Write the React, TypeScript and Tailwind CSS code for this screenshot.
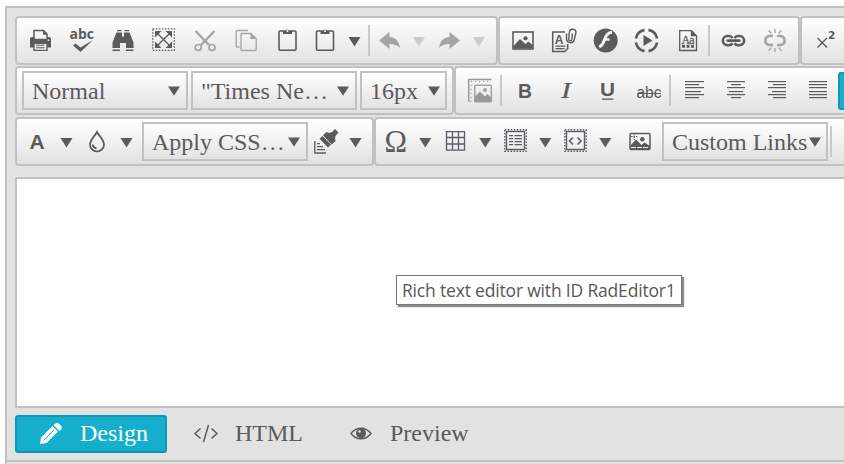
import type { ReactNode } from 'react';

const DARK = '#5b5b5b';
const MUTED = '#a5a5a5';

type CellProps = { x: number; y: number; w: number; h?: number; label: string; children: ReactNode };

// Every glyph is drawn on one shared grid; a cell shows its own window of that grid.
function Cell({ x, y, w, h = 45, label, children }: CellProps) {
  return (
    <button aria-label={label} className="block shrink-0">
      <svg width={w} height={h} viewBox={`${x} ${y} ${w} ${h}`} fill={DARK} className="block">
        {children}
      </svg>
    </button>
  );
}

function Arrow({ x, y, w, cx, off }: { x: number; y: number; w: number; cx: number; off?: boolean }) {
  const t = y + 19;
  return (
    <Cell x={x} y={y} w={w} label="Open menu">
      <path d={`M${cx - 6} ${t}h12l-6 9.5z`} fill={off ? '#cbcbcb' : DARK} />
    </Cell>
  );
}

const Sep = () => <div className="mx-0.5 mt-[7px] h-[31px] w-0.5 shrink-0 bg-[#c8c8c8]" />;

function Group({ className, children }: { className: string; children?: ReactNode }) {
  return (
    <div
      className={`flex h-[49px] shrink-0 items-start rounded-[4px] border-2 border-[#c1c1c1] bg-linear-to-b from-white to-[#e2e2e2] ${className}`}
    >
      {children}
    </div>
  );
}

function Select({ text, className, pad = 'pr-[6px]' }: { text: string; className: string; pad?: string }) {
  return (
    <div
      className={`mt-[3px] flex h-[39px] shrink-0 items-center justify-between border-2 border-[#c1c1c1] bg-linear-to-b from-white to-[#e2e2e2] pl-[8px] ${pad} ${className}`}
    >
      <span className="w-0 pt-0.5 text-2xl leading-[35px] whitespace-nowrap">{text}</span>
      <svg width="12" height="10" viewBox="0 0 12 10" fill={DARK} className="shrink-0">
        <path d="M0 0.5h12L6 9.8z" />
      </svg>
    </div>
  );
}

function Clipboard({ x }: { x: number }) {
  return (
    <>
      <rect x={x + 1} y="31" width="17" height="19.3" rx="1" fill="none" stroke={DARK} strokeWidth="1.6" />
      <path d={`M${x + 5} 34v-3h2.4a2.2 2.2 0 0 1 4.2 0h2.4v3z`} />
      <circle cx={x + 9.5} cy="31" r="1" fill="#fff" />
    </>
  );
}

function Lines({ rows }: { rows: [number, number][] }) {
  const ys = [81, 84, 87, 91, 94, 97];
  return (
    <>
      {rows.map(([a, b], i) => (
        <rect key={i} x={a} y={ys[i]} width={b - a} height="1.2" />
      ))}
    </>
  );
}

function Stamp({ x }: { x: number }) {
  return (
    <>
      <rect x={x + 0.8} y="129.8" width="21.4" height="21.4" fill="none" stroke={DARK} strokeWidth="1.4" strokeDasharray="1.5 1.5" />
      <rect x={x + 2.5} y="131.5" width="18" height="18" fill="none" stroke="#5b5b6c" strokeWidth="1.4" />
    </>
  );
}

function RowOne() {
  const y = 18;
  return (
    <div className="flex">
      <Group className="w-[483px] pl-[3px]">
        <Cell x={20} y={y} w={41} label="Print">
          <path d="M32 37h17a2 2 0 0 1 2 2v8.500H30V39a2 2 0 0 1 2-2z" />
          <path d="M34 39.500v-9h9.500l3.500 3.500v5.500z" fill="#f6f6f6" stroke={DARK} strokeWidth="1.500" />
          <path d="M43 30l4.700 4.700H43z" />
          <path d="M33 39h15v2.500H33z" />
          <path d="M34 43.300h13v7H34z" fill="#ededed" stroke={DARK} strokeWidth="1.300" />
          <path d="M36 44.800h8.500v1H36zM36 47.300h8.500v1H36z" />
          <path d="M47.500 39.500h2v1.200h-2z" fill="#fff" />
        </Cell>
        <Cell x={61} y={y} w={41} label="Spell check">
          <text x="69.5" y="39" fontSize="14" fontWeight="700" fontFamily="'Open Sans', sans-serif">abc</text>
          <path d="M73 45.5l2.500-2 5 4L93 40 80.500 52z" />
        </Cell>
        <Cell x={102} y={y} w={41} label="Find">
          <path d="M117 30h4.500v1.200H117zM124.500 30h4.500v1.200h-4.500zM116.500 32.500h5.500v4h2v-4h5.500l4 10v5.500h-7.500v-5h-6v5h-7.500v-5.500zM112.500 49.500h7.500v1.500h-7.500zM126 49.500h7.500v1.500H126z" />
        </Cell>
        <Cell x={143} y={y} w={41} label="Select all">
          <rect x="152.800" y="28.800" width="21.500" height="21.500" fill="none" stroke={DARK} strokeWidth="1.300" strokeDasharray="1.5 1.5" />
          <path d="M157 33l13 13M170 33l-13 13" stroke={DARK} strokeWidth="1.400" />
          <path d="M155 31h6.500L155 37.500zM172 31v6.500L165.500 31zM155 48v-6.500l6.500 6.500zM172 48h-6.500l6.500-6.500z" />
        </Cell>
        <Cell x={184} y={y} w={41} label="Cut">
          <g fill="none" stroke={MUTED}>
            <path d="M195.500 31l13.500 14M214.500 31L201 45" strokeWidth="2.400" />
            <circle cx="198.200" cy="47.500" r="3" strokeWidth="1.700" />
            <circle cx="212" cy="47.500" r="3" strokeWidth="1.700" />
          </g>
        </Cell>
        <Cell x={225} y={y} w={41} label="Copy">
          <g fill="none" stroke={MUTED} strokeWidth="1.300">
            <path d="M239.500 47h-2.300a1 1 0 0 1-1-1V31.500a1 1 0 0 1 1-1H248" />
            <path d="M242 33.500h9l5.200 5v11a1 1 0 0 1-1 1H242a1 1 0 0 1-1-1v-15a1 1 0 0 1 1-1z" />
          </g>
          <path d="M250.500 33l6 6h-6z" fill={MUTED} />
        </Cell>
        <Cell x={266} y={y} w={42} label="Paste"><Clipboard x={278} /></Cell>
        <Cell x={308} y={y} w={34} label="Paste options"><Clipboard x={315.500} /></Cell>
        <Arrow x={342} y={y} w={24} cx={354.500} />
        <Sep />
        <Cell x={372} y={y} w={34} label="Undo">
          <path d="M379 40.500L389.500 32v5c6 .5 9.500 4 10.500 11-3-3-6-4-10.500-4v5z" fill={MUTED} />
        </Cell>
        <Arrow x={406} y={y} w={26} cx={419} off />
        <Cell x={432} y={y} w={34} label="Redo">
          <path d="M460 40.500L449.500 32v5c-6 .5-9.500 4-10.500 11 3-3 6-4 10.500-4v5z" fill={MUTED} />
        </Cell>
        <Arrow x={466} y={y} w={28} cx={479} off />
      </Group>
      <Group className="w-[302px] pl-[2px]">
        <Cell x={502} y={y} w={41} label="Image">
          <rect x="513" y="32" width="20" height="17" fill="none" stroke={DARK} strokeWidth="1.600" />
          <path d="M513 46.500l7-7.500 5.500 5 3-2.500 4.500 4v3h-20z" />
          <circle cx="525.500" cy="38.300" r="2.100" />
        </Cell>
        <Cell x={543} y={y} w={41} label="Documents">
          <path d="M565 32h-12.300v19.500h12l3-3V44" fill="none" stroke={DARK} strokeWidth="1.500" />
          <text x="554.800" y="44" fontSize="12" fontWeight="700" fontFamily="'Liberation Sans', sans-serif">A</text>
          <path d="M555.500 45.500h10v1.200h-10zM555.500 48h9v1.200h-9z" />
          <path d="M566.500 33.500v5.500a3.900 3.900 0 0 0 7.600 1l1.800-7c.5-4.500-6-5-6.500-1l-.7 7c0 2.500 3 2.500 3.200 0l.5-5.500" fill="none" stroke={DARK} strokeWidth="1.400" />
        </Cell>
        <Cell x={584} y={y} w={41} label="Flash">
          <circle cx="605.700" cy="40.500" r="12" />
          <path d="M612 32.500c-4.500-.5-6 3-7.300 6.500-1.200 3.500-2 6.500-5.500 7.800" fill="none" stroke="#f5f5f5" strokeWidth="3" />
          <path d="M604.500 39.500h5" stroke="#f5f5f5" strokeWidth="2.400" />
        </Cell>
        <Cell x={625} y={y} w={41} label="Media">
          <g fill="none" stroke={DARK} strokeWidth="2.600">
            <path d="M648.500 29.900a10.800 10.800 0 0 1 8.600 8.600M657.100 42.500a10.800 10.800 0 0 1-8.600 8.600M644.500 51.100a10.800 10.800 0 0 1-8.600-8.600M635.900 38.500a10.800 10.800 0 0 1 8.600-8.600" />
          </g>
          <path d="M643.500 35l9 5.500-9 5.500z" />
        </Cell>
        <Cell x={666} y={y} w={40} label="Template">
          <path d="M679.700 30.700h11.800l5 5v14.800h-16.800z" fill="none" stroke={DARK} strokeWidth="1.300" />
          <path d="M690.800 30l6.200 6.200h-6.200z" />
          <text x="681.500" y="43.500" fontSize="12" fontFamily="'Liberation Serif', serif" stroke={DARK} strokeWidth=".3" textLength="13">Aa</text>
          <path d="M682 45h3v2.800h-3zM686.500 45h3v2.800h-3zM691 45h3v2.800h-3z" />
        </Cell>
        <Sep />
        <Cell x={712} y={y} w={42} label="Link">
          <g fill="none" stroke={DARK} strokeWidth="2.600">
            <path d="M732.500 38c-1-1.500-2-2-3.500-2h-1.500a4.600 4.600 0 0 0 0 9.200h1.500c1.500 0 2.500-.5 3.500-2" />
            <path d="M734.500 38c1-1.500 2-2 3.500-2h1.500a4.600 4.600 0 0 1 0 9.200H738c-1.500 0-2.500-.5-3.500-2" />
            <path d="M727.800 40.600h11.500" strokeWidth="2.800" strokeLinecap="round" />
          </g>
        </Cell>
        <Cell x={754} y={y} w={42} label="Remove link">
          <g fill="none" stroke={MUTED}>
            <path d="M773 36h-4a4.600 4.600 0 0 0 0 9h4M777 36h4a4.600 4.600 0 0 1 0 9h-4" strokeWidth="2.600" />
            <path d="M775 29v4M775 48v4M768.500 30.500l3 3M781.500 30.500l-3 3M768.500 50.500l3-3M781.500 50.500l-3-3" strokeWidth="1.300" />
          </g>
        </Cell>
      </Group>
      <Group className="w-[240px] pl-[2px]">
        <Cell x={804} y={y} w={42} label="Superscript">
          <path d="M817.500 38l9.500 9.500M827 38l-9.500 9.500" stroke={DARK} strokeWidth="1.300" />
          <text x="828" y="39.300" fontSize="10.500" fontWeight="700" fontFamily="'DejaVu Sans', sans-serif">2</text>
        </Cell>
      </Group>
    </div>
  );
}

function RowTwo() {
  const y = 68;
  return (
    <div className="mt-px flex">
      <Group className="w-[439px] gap-[3px] pl-[5px]">
        <Select text="Normal" className="w-[166px]" />
        <Select text={'"Times Ne…'} className="w-[166px]" />
        <Select text="16px" className="w-[87px]" pad="pr-[5px]" />
      </Group>
      <Group className="w-[600px]">
        <Cell x={456} y={y} w={42} label="Image map">
          <g fill="none" stroke={MUTED}>
            <path d="M468.700 102V79.500H491.500" strokeWidth="1.500" stroke="#999" />
            <path d="M471 102V82M471 81.500h20" strokeWidth="1.300" strokeDasharray="1.200 2.800" />
            <rect x="474.800" y="85.300" width="16.500" height="16.500" rx="1" strokeWidth="1.600" />
          </g>
          <path d="M474.500 97l5.500-5.500 5 5 2.500-2.500 4 4V102h-17z" fill="#999" />
          <circle cx="485" cy="90" r="2.100" fill={MUTED} />
        </Cell>
        <Sep />
        <Cell x={504} y={y} w={41} label="Bold">
          <text x="518" y="97.500" fontSize="20" fontWeight="700" fontFamily="'Liberation Sans', sans-serif" textLength="14" lengthAdjust="spacingAndGlyphs">B</text>
        </Cell>
        <Cell x={545} y={y} w={41} label="Italic">
          <text x="561" y="97.500" fontSize="22.500" fontStyle="italic" stroke={DARK} strokeWidth=".2" fontFamily="'Liberation Serif', serif" textLength="10" lengthAdjust="spacingAndGlyphs">I</text>
        </Cell>
        <Cell x={586} y={y} w={41} label="Underline">
          <text x="600" y="96" fontSize="19" fontWeight="700" fontFamily="'Liberation Sans', sans-serif" textLength="15" lengthAdjust="spacingAndGlyphs">U</text>
          <path d="M602 98.500h11.500v1.300H602z" />
        </Cell>
        <Cell x={627} y={y} w={40} label="Strikethrough">
          <text x="636.500" y="98" fontSize="16" fontFamily="'Liberation Sans', sans-serif" textLength="25" lengthAdjust="spacingAndGlyphs">abc</text>
          <path d="M637 93h24v1h-24z" />
        </Cell>
        <Sep />
        <Cell x={673} y={y} w={41} label="Align left">
          <Lines rows={[[685, 704], [685, 699], [685, 704], [685, 701], [685, 704], [685, 699]]} />
        </Cell>
        <Cell x={714} y={y} w={41} label="Align center">
          <Lines rows={[[727, 745], [731, 741], [727, 745], [729, 743], [727, 745], [731, 741]]} />
        </Cell>
        <Cell x={755} y={y} w={41} label="Align right">
          <Lines rows={[[768, 786], [773, 786], [768, 786], [772, 786], [768, 786], [773, 786]]} />
        </Cell>
        <Cell x={796} y={y} w={42} label="Justify">
          <Lines rows={[[809, 827], [809, 827], [809, 827], [809, 827], [809, 827], [809, 827]]} />
        </Cell>
        <div className="mt-1 h-[38px] w-[38px] shrink-0 rounded-[3px] border-2 border-[#1197ae] bg-[#15afcd]" />
      </Group>
    </div>
  );
}

function RowThree() {
  const y = 119;
  return (
    <div className="mt-0.5 flex">
      <Group className="w-[359px] pl-[3px]">
        <Cell x={20} y={y} w={36} label="Text color">
          <text x="29.500" y="149" fontSize="21" fontWeight="700" fontFamily="'Liberation Sans', sans-serif">A</text>
        </Cell>
        <Arrow x={56} y={y} w={24} cx={66.500} />
        <Cell x={80} y={y} w={36} label="Background color">
          <path d="M97 132c2.500 4.500 7 8 7 12.500a7 7 0 0 1-14 0c0-4.500 4.500-8 7-12.500z" fill="none" stroke={DARK} strokeWidth="1.700" />
          <path d="M92.500 144.500c.5 2 2 3.500 4 4" fill="none" stroke={DARK} strokeWidth="1.600" />
        </Cell>
        <Arrow x={116} y={y} w={26} cx={126.500} />
        <Select text="Apply CSS…" className="w-[166px]" />
        <Cell x={308} y={y} w={36} label="Format painter">
          <path d="M314.800 141v12H326" fill="none" stroke={DARK} strokeWidth="1.300" />
          <path d="M317 143h3v1.200h-3zM317 146h6v1.200h-6zM317 149h8v1.200h-8z" />
          <path d="M319.500 138.800l3-2.800 8.500 8.500-3 3z" />
          <path d="M323 135.300l3.500-3.300 2.500 1 3-1 3-3 3.500 3.500-3 3.500-.500 3 .7 2-4 3.500z" />
        </Cell>
        <Arrow x={344} y={y} w={26} cx={355.500} />
      </Group>
      <Group className="w-[640px]">
        <Cell x={376} y={y} w={38} label="Symbol">
          <text x="384.500" y="152" fontSize="31" fontFamily="'Liberation Serif', serif" textLength="22.500" lengthAdjust="spacingAndGlyphs">Ω</text>
        </Cell>
        <Arrow x={414} y={y} w={24} cx={425.300} />
        <Cell x={438} y={y} w={36} label="Table">
          <path d="M446.500 131.700h18v18.500h-18zM452.500 131.500v19M458.500 131.500v19M446 137.500h19M446 144h19" fill="none" stroke="#5b5b70" strokeWidth="1.300" />
        </Cell>
        <Arrow x={474} y={y} w={24} cx={485.300} />
        <Cell x={498} y={y} w={36} label="Snippet">
          <Stamp x={504} />
          <path d="M509 135h4v1.300h-4zM509 138h4v1.300h-4zM509 141h4v1.300h-4zM509 144h4v1.300h-4zM514.500 135h7.500v1.300h-7.500zM514.500 138h7.500v1.300h-7.500zM514.500 141h7.500v1.300h-7.500zM514.500 144h7.500v1.300h-7.500z" />
        </Cell>
        <Arrow x={534} y={y} w={24} cx={545.300} />
        <Cell x={558} y={y} w={36} label="Code block">
          <Stamp x={564} />
          <path d="M573 137.500l-3.500 3.500 3.500 3.500M577.500 137.500l3.500 3.500-3.500 3.500" fill="none" stroke={DARK} strokeWidth="1.500" />
        </Cell>
        <Arrow x={594} y={y} w={24} cx={605.300} />
        <Cell x={618} y={y} w={44} label="Image editor">
          <rect x="630" y="133.500" width="20" height="16" rx="1" fill="none" stroke={DARK} strokeWidth="1.500" />
          <path d="M630 146l6-6.500 5.500 5.500 3-2.500 5.500 3.500v3h-20z" />
          <circle cx="642.300" cy="139.200" r="2.200" />
          <path d="M634.200 134v6M631 136.500h7" stroke={DARK} strokeWidth="1" strokeDasharray="1.500 1" />
          <path d="M631 147.500h18" stroke="#eee" strokeWidth="1" strokeDasharray="5 1" />
        </Cell>
        <Select text="Custom Links" className="w-[166px]" pad="pr-[5px]" />
        <Sep />
      </Group>
    </div>
  );
}

function Modes() {
  return (
    <div className="mt-[7px] flex h-[38px] items-center text-2xl leading-[34px]">
      <div className="flex h-[38px] w-[152px] items-center rounded-[3px] border-2 border-[#1197ae] bg-[#15afcd] text-white">
        <svg width="63" height="34" viewBox="17 417 63 34" fill="#fff" className="shrink-0">
          <path d="M40 444l1-6.500 11.500-11.500 5.500 5.500L46.500 443zM53.500 425l2-1.500c1.500-1 3-.5 4.500 1s2.500 3 1.500 4.500L59.500 431z" />
          <path d="M43.500 440.500l10.500-10.500" stroke="#15afcd" strokeWidth="1" />
        </svg>
        <span className="pb-0.5">Design</span>
      </div>
      <svg width="68" height="38" viewBox="167 415 68 38" fill="none" stroke={DARK} strokeWidth="1.500" className="shrink-0">
        <path d="M200.500 428.500l-5.500 5 5.500 5M211.500 428.500l5.500 5-5.500 5M208.500 425l-5 17" />
      </svg>
      <span className="w-[68px] pb-0.5">HTML</span>
      <svg width="87" height="38" viewBox="303 415 87 38" fill={DARK} className="shrink-0">
        <path d="M351 433.500c5.500-7 14.500-7 20 0-5.500 7-14.500 7-20 0z" fill="none" stroke={DARK} strokeWidth="1.400" />
        <circle cx="361" cy="433.300" r="5" />
        <circle cx="359.500" cy="431.500" r="1.300" fill="#e2e2e2" />
      </svg>
      <span className="pb-0.5">Preview</span>
    </div>
  );
}

export default function App() {
  return (
    <div className="h-[464px] w-[844px] overflow-hidden bg-white pt-1.5 pl-[5px] font-['Liberation_Serif',serif] text-[#5b5b5b]">
      <div className="h-[458px] w-[839px] overflow-hidden border-t-2 border-l-2 border-[#c1c1c1] bg-[#e2e2e2]">
        <div className="flex h-[454px] w-[1100px] flex-col border-b-2 border-[#c1c1c1] pt-2 pl-2">
          <RowOne />
          <RowTwo />
          <RowThree />
          <div className="relative mt-[11px] h-[231px] w-[1080px] shrink-0 border-2 border-[#c1c1c1] bg-white">
            <div
              role="tooltip"
              className="absolute top-[96px] left-[379px] flex h-[30px] w-[286px] items-center border border-[#767676] bg-white pl-[5px] font-['Open_Sans','Noto_Sans',sans-serif] text-[17.5px] tracking-[-0.18px] whitespace-nowrap text-[#575757] shadow-[2px_2px_1px_#8c8c8c]"
            >
              Rich text editor with ID RadEditor1
            </div>
          </div>
          <Modes />
        </div>
      </div>
    </div>
  );
}
